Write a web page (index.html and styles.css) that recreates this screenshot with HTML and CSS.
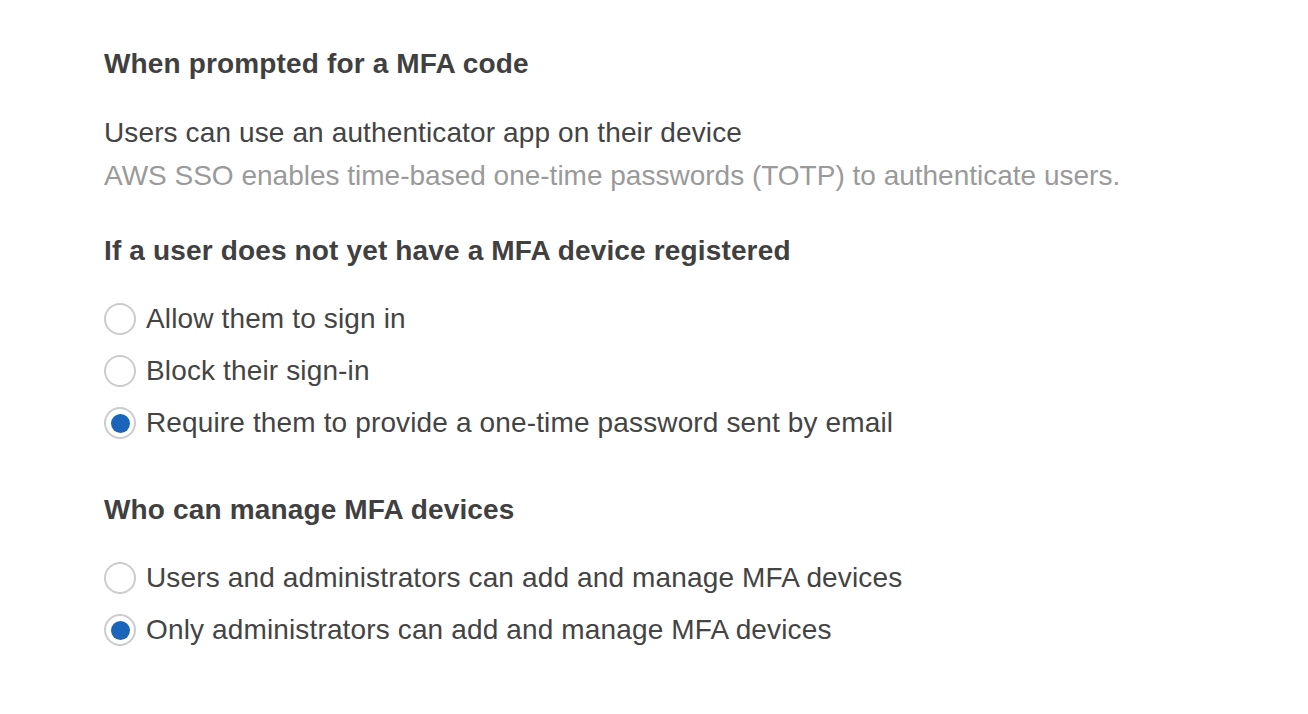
FILE: index.html
```html
<!DOCTYPE html>
<html>
<head>
<meta charset="utf-8">
<link rel="stylesheet" href="styles.css">
</head>
<body>
<div class="page">
  <h2 class="heading h-first">When prompted for a MFA code</h2>
  <div class="desc">
    <p class="line">Users can use an authenticator app on their device</p>
    <p class="line muted">AWS SSO enables time-based one-time passwords (TOTP) to authenticate users.</p>
  </div>
  <h2 class="heading h-second">If a user does not yet have a MFA device registered</h2>
  <div class="radios">
    <label class="radio"><span class="dot"></span><span>Allow them to sign in</span></label>
    <label class="radio"><span class="dot"></span><span>Block their sign-in</span></label>
    <label class="radio"><span class="dot checked"></span><span>Require them to provide a one-time password sent by email</span></label>
  </div>
  <h2 class="heading h-third">Who can manage MFA devices</h2>
  <div class="radios">
    <label class="radio"><span class="dot"></span><span>Users and administrators can add and manage MFA devices</span></label>
    <label class="radio"><span class="dot checked"></span><span>Only administrators can add and manage MFA devices</span></label>
  </div>
</div>
</body>
</html>
```
FILE: styles.css
```css
html, body {
  margin: 0;
  padding: 0;
  background: #ffffff;
}
body {
  font-family: "Liberation Sans", Arial, Helvetica, sans-serif;
  font-size: 28px;
  color: #444444;
  letter-spacing: 0.12px;
}
.page {
  padding: 43px 0 0 104px;
  display: flex;
  flex-direction: column;
}
.heading {
  margin: 0;
  font-size: 28px;
  font-weight: bold;
  line-height: 42px;
  color: #404040;
  letter-spacing: 0.15px;
}
.desc {
  margin-top: 26px;
}
.line {
  margin: 0;
  line-height: 43px;
}
.muted {
  color: #9a9a9a;
  letter-spacing: 0;
}
.h-second {
  margin-top: 33px;
}
.h-third {
  margin-top: 40px;
}
.radios {
  margin-top: 21px;
  display: flex;
  flex-direction: column;
}
.radio {
  display: flex;
  align-items: center;
  height: 52px;
  gap: 10px;
  letter-spacing: 0.14px;
}
.dot {
  box-sizing: border-box;
  width: 32px;
  height: 32px;
  border-radius: 50%;
  border: 2px solid #cccccc;
  display: flex;
  align-items: center;
  justify-content: center;
  flex: none;
}
.dot.checked::after {
  content: "";
  width: 19px;
  height: 19px;
  border-radius: 50%;
  background: #1a65ba;
}
```
